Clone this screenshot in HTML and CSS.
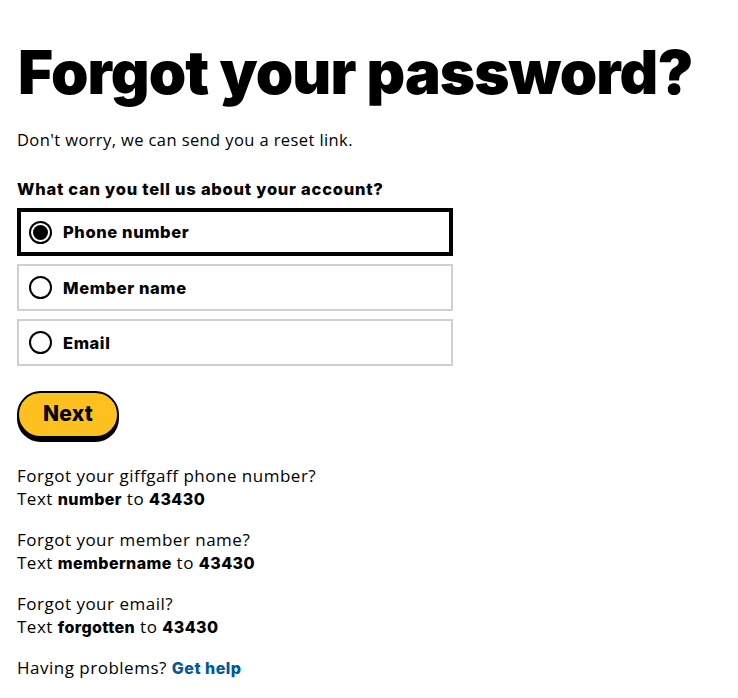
FILE: index.html
```html
<!DOCTYPE html>
<html lang="en">
<head>
<meta charset="utf-8">
<title>Forgot your password?</title>
<link rel="stylesheet" href="styles.css">
</head>
<body>
<main class="page">
  <h1 class="title">Forgot your password?</h1>
  <p class="intro">Don't worry, we can send you a reset link.</p>
  <form class="form">
    <fieldset class="group">
      <legend class="legend">What can you tell us about your account?</legend>
      <label class="option option-selected">
        <span class="radio radio-on"></span>
        <span class="option-text">Phone number</span>
      </label>
      <label class="option">
        <span class="radio"></span>
        <span class="option-text">Member name</span>
      </label>
      <label class="option">
        <span class="radio"></span>
        <span class="option-text">Email</span>
      </label>
    </fieldset>
    <button type="button" class="btn">Next</button>
  </form>
  <div class="help">
    <p class="help-item">Forgot your giffgaff phone number?<br>Text <b>number</b> to <b>43430</b></p>
    <p class="help-item">Forgot your member name?<br>Text <b>membername</b> to <b>43430</b></p>
    <p class="help-item">Forgot your email?<br>Text <b>forgotten</b> to <b>43430</b></p>
    <p class="help-item">Having problems? <a class="link" href="#">Get help</a></p>
  </div>
</main>
</body>
</html>
```

FILE: styles.css
```css
* { box-sizing: border-box; }
html, body { margin: 0; padding: 0; background: #fff; }
body {
  font-family: "Open Sans", "Lato", sans-serif;
  color: #000;
}
.page {
  padding: 36px 17px 0 17px;
  width: 738px;
}
.title {
  margin: 0;
  font-family: "Inter", "Roboto", sans-serif;
  font-weight: 900;
  font-size: 60px;
  line-height: 72px;
  letter-spacing: -0.9px;
  padding-left: 1px;
}
.intro {
  margin: 20px 0 0 0;
  font-size: 16.5px;
  letter-spacing: 0.4px;
  line-height: 24px;
}
.form { margin-top: 26px; }
.group { border: 0; margin: 0; padding: 0; width: 436px; }
.legend {
  padding: 0;
  font-family: "Inter", sans-serif;
  font-weight: 800;
  font-size: 16.5px;
  letter-spacing: 0.75px;
  line-height: 22px;
  margin-bottom: 8px;
}
.option {
  display: flex;
  align-items: center;
  gap: 11px;
  height: 47px;
  border: 2px solid #cfcfcf;
  padding-left: 10px;
  margin-bottom: 8px;
}
.option-selected {
  border: 4px solid #000;
  height: 48px;
  padding-left: 8px;
}
.radio {
  width: 23px;
  height: 23px;
  border-radius: 50%;
  border: 2px solid #000;
  background: #fff;
  flex: none;
  position: relative;
}
.radio-on::after {
  content: "";
  position: absolute;
  left: 2px; top: 2px; right: 2px; bottom: 2px;
  border-radius: 50%;
  background: #000;
}
.option-text {
  font-family: "Inter", sans-serif;
  font-weight: 800;
  font-size: 16.5px;
  letter-spacing: 0.6px;
}
.btn {
  margin-top: 17px;
  width: 102px;
  height: 47px;
  border: 2px solid #000;
  border-radius: 24px;
  background: #fcc11e;
  box-shadow: 0 4px 0 #000;
  font-family: "Inter", sans-serif;
  font-weight: 800;
  font-size: 21px;
  letter-spacing: 0.3px;
  color: #000;
  padding: 0 0 3px 0;
}
.help { margin-top: 26px; }
.help-item {
  margin: 0 0 18px 0;
  font-size: 17px;
  letter-spacing: 0.5px;
  line-height: 23px;
}
.help-item b {
  font-family: "Inter", sans-serif;
  font-weight: 800;
  font-size: 16px;
  line-height: 1;
  letter-spacing: 0.4px;
}
.link {
  color: #005a96;
  text-decoration: none;
  font-family: "Inter", sans-serif;
  font-weight: 800;
  font-size: 16px;
  line-height: 1;
  letter-spacing: 0.5px;
}
```
